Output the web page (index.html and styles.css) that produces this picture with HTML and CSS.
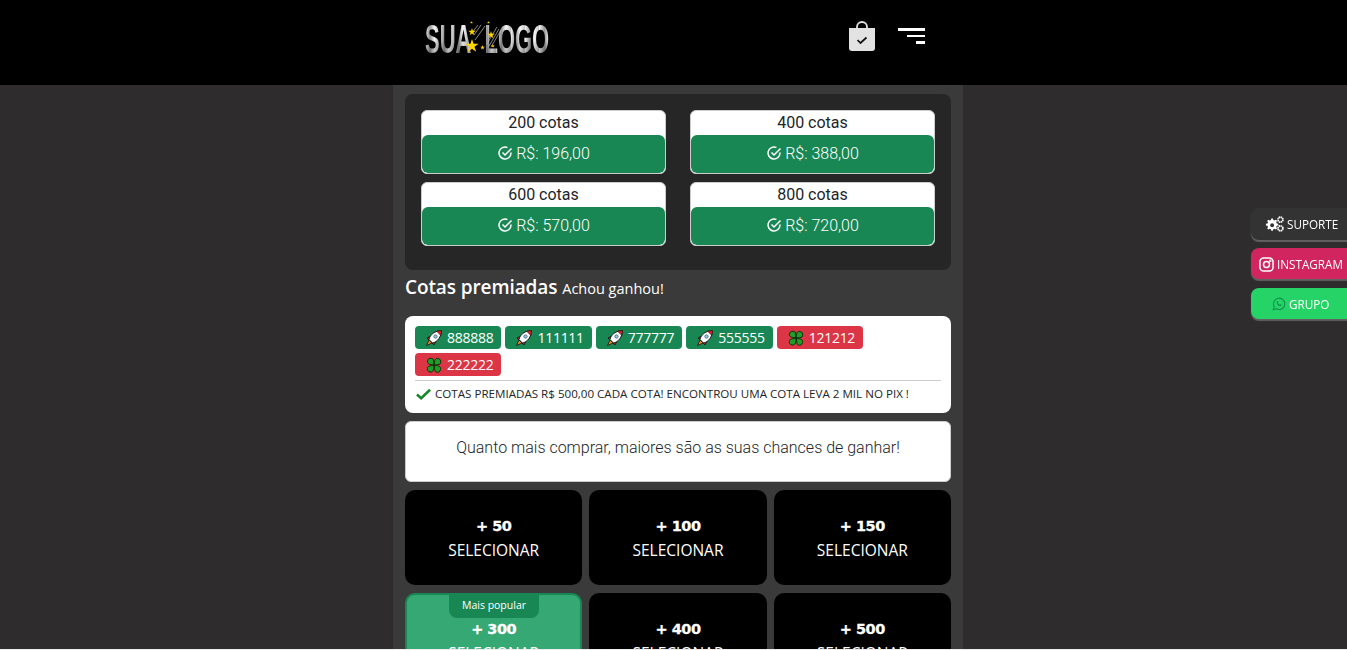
FILE: index.html
```html
<!DOCTYPE html>
<html lang="pt-BR">
<head>
    <title>Sua Logo</title>
    <meta charset="UTF-8">
    <link rel="stylesheet" href="styles.css">
</head>
<body>
    <svg class="defs">
        <symbol id="star" viewBox="-1 -1 2 2">
            <path d="M0-1L.225-.31H.95L.36.12.59.81 0 .38-.59.81-.36.12-.95-.31H-.225Z" fill="#ffd500"/>
        </symbol>
        <symbol id="rocket" viewBox="0 0 16 16">
            <path d="M3 10L.5 15.500 6 13z" fill="#f08a1d" stroke="#111" stroke-width=".8"/>
            <path d="M4 6.500L1 8l2 2zM9.500 12L8 15l-2-2z" fill="#d9252a" stroke="#111" stroke-width=".8"/>
            <path d="M3 9.500C4 4.500 9 .8 15.500.5c-.3 6.500-4 11.500-9 12.500z" fill="#fff" stroke="#111" stroke-width=".9"/>
            <path d="M10.500 1.200L15.500.5l-.7 5z" fill="#d9252a" stroke="#111" stroke-width=".5"/>
            <circle cx="9.500" cy="6.500" r="1.700" fill="#8fd0f2" stroke="#334" stroke-width=".6"/>
        </symbol>
        <symbol id="clover" viewBox="0 0 16 16">
            <g fill="#1f9e2a" stroke="#0a2f0a" stroke-width="1">
                <path d="M8 7.500C3 8 1 6.500 1.500 4 2 1.500 4 1 5 1.500 6.500 .5 8 2.500 8 7.500z"/>
                <path d="M8.500 8C8 3 9.500 1 12 1.500c2.500.5 3 2.500 2.500 3.500 1 1.500-1 3-6 3z"/>
                <path d="M8 8.500C8 13.500 6.500 15.500 4 15 1.500 14.500 1 12.500 1.500 11.500 .5 10 3 8.500 8 8.500z"/>
                <path d="M8.500 8.500c5 0 6.500 1.500 6 4-.5 2.500-2.500 3-3.500 2.500-1.500 1-2.500-1.500-2.500-6.500z"/>
            </g>
        </symbol>
        <symbol id="check" viewBox="0 0 16 16">
            <path d="M14 7.400V8a6 6 0 1 1-3.600-5.500" fill="none" stroke="#fff" stroke-width="1.500"/>
            <path d="M5.500 7.500l2.500 2.500 6.500-6.500" fill="none" stroke="#fff" stroke-width="1.500"/>
        </symbol>
    </svg>

    <header class="topbar">
        <div class="topbar-inner">
            <a class="logo" href="#">
                <span class="logo-text">SUA LOGO</span>
                <svg class="logo-stars" viewBox="0 0 46 34" width="46" height="34">
                    <path d="M12 13l6-8M14 15l7-10M15 20l10-14M27 24l10-17M29 26l10-17M31 27l10-17" stroke="#bbb" stroke-width=".7"/>
                    <use href="#star" x="5" y="19" width="14" height="14"/>
                    <use href="#star" x="8" y="8" width="8" height="8"/>
                    <use href="#star" x="27" y="11" width="8" height="8"/>
                    <use href="#star" x="20" y="25" width="5" height="5"/>
                    <use href="#star" x="31" y="24" width="4" height="4"/>
                    <use href="#star" x="10" y="1" width="3" height="3"/>
                    <use href="#star" x="27" y="1" width="3" height="3"/>
                </svg>
            </a>
            <div class="topbar-icons">
                <svg class="bag-icon" viewBox="0 0 28 30" width="28" height="30">
                    <path d="M9 9V6a5 5 0 0 1 10 0v3" fill="none" stroke="#e2e2e2" stroke-width="1.800"/>
                    <path d="M1 7h26v20a3 3 0 0 1-3 3H4a3 3 0 0 1-3-3z" fill="#e2e2e2"/>
                    <path d="M9.500 19l3 3 6-5.500" fill="none" stroke="#111" stroke-width="1.700"/>
                </svg>
                <div class="menu-icon"><span class="line-a"></span><span class="line-b"></span><span class="line-c"></span></div>
            </div>
        </div>
    </header>

    <main class="page">
        <section class="packs">
            <div class="pack">
                <div class="pack-title">200 cotas</div>
                <div class="pack-price"><svg class="check"><use href="#check"/></svg>R$: 196,00</div>
            </div>
            <div class="pack">
                <div class="pack-title">400 cotas</div>
                <div class="pack-price"><svg class="check"><use href="#check"/></svg>R$: 388,00</div>
            </div>
            <div class="pack">
                <div class="pack-title">600 cotas</div>
                <div class="pack-price"><svg class="check"><use href="#check"/></svg>R$: 570,00</div>
            </div>
            <div class="pack">
                <div class="pack-title">800 cotas</div>
                <div class="pack-price"><svg class="check"><use href="#check"/></svg>R$: 720,00</div>
            </div>
        </section>

        <h2 class="section-title">Cotas premiadas <small>Achou ganhou!</small></h2>

        <section class="prizes">
            <div class="badges">
                <span class="badge green"><svg class="badge-icon"><use href="#rocket"/></svg>888888</span>
                <span class="badge green"><svg class="badge-icon"><use href="#rocket"/></svg>111111</span>
                <span class="badge green"><svg class="badge-icon"><use href="#rocket"/></svg>777777</span>
                <span class="badge green"><svg class="badge-icon"><use href="#rocket"/></svg>555555</span>
                <span class="badge red"><svg class="badge-icon"><use href="#clover"/></svg>121212</span>
                <span class="badge red"><svg class="badge-icon"><use href="#clover"/></svg>222222</span>
            </div>
            <div class="prize-note">
                <svg class="tick" viewBox="0 0 16 12" width="15" height="12"><path d="M1 6.500l4.500 4L15 1.500" fill="none" stroke="#158a2a" stroke-width="2.800"/></svg>
                COTAS PREMIADAS R$ 500,00 CADA COTA! ENCONTROU UMA COTA LEVA 2 MIL NO PIX !
            </div>
        </section>

        <section class="chances">Quanto mais comprar, maiores são as suas chances de ganhar!</section>

        <section class="options">
            <div class="option"><b>+ 50</b><span>SELECIONAR</span></div>
            <div class="option"><b>+ 100</b><span>SELECIONAR</span></div>
            <div class="option"><b>+ 150</b><span>SELECIONAR</span></div>
            <div class="option popular"><em>Mais popular</em><b>+ 300</b><span>SELECIONAR</span></div>
            <div class="option"><b>+ 400</b><span>SELECIONAR</span></div>
            <div class="option"><b>+ 500</b><span>SELECIONAR</span></div>
        </section>
    </main>

    <aside class="side-links">
        <a class="side-link dark" href="#">
            <svg viewBox="0 0 24 20" width="19" height="16" fill="#fff">
                <path d="M9 4.500l1 0 .5 2 1.500.6 1.800-1 1.400 1.400-1 1.800.6 1.500 2 .5v2l-2 .5-.6 1.500 1 1.800-1.400 1.400-1.800-1-1.500.6-.5 2h-2l-.5-2-1.500-.6-1.800 1-1.400-1.400 1-1.800-.6-1.500-2-.5v-2l2-.5.6-1.500-1-1.800 1.400-1.400 1.800 1 1.500-.6.500-2zm0 6a2.500 2.500 0 1 0 0 5 2.500 2.500 0 0 0 0-5z" fill-rule="evenodd" transform="translate(0 -1.500)"/>
                <circle cx="19.500" cy="4.500" r="3.100" fill="none" stroke="#fff" stroke-width="2.300" stroke-dasharray="1.800 .6"/>
                <circle cx="19.500" cy="15.500" r="3.100" fill="none" stroke="#fff" stroke-width="2.300" stroke-dasharray="1.800 .6"/>
            </svg>
            SUPORTE
        </a>
        <a class="side-link insta" href="#">
            <svg viewBox="0 0 16 16" width="15" height="15" fill="none" stroke="#fff" stroke-width="1.600"><rect x="1" y="1" width="14" height="14" rx="4"/><circle cx="8" cy="8" r="3.200"/><circle cx="12" cy="4" r=".5"/></svg>
            INSTAGRAM
        </a>
        <a class="side-link whats" href="#">
            <svg viewBox="0 0 16 16" width="14" height="14" fill="none" stroke="#128c4e" stroke-width="1.200"><path d="M1.500 14.500l1-3.500a6.500 6.500 0 1 1 2.500 2.500z"/><path d="M5.500 5c.5-.8 1-.6 1.200 0l.3.8-.5.8c.5 1 1.300 1.800 2.400 2.300l.8-.6.9.4c.5.3.5.8 0 1.300-2.500 1.300-6-2.500-5.100-5z" fill="#128c4e" stroke="none"/></svg>
            GRUPO
        </a>
    </aside>

    <div class="bottom-edge"></div>
</body>
</html>
```

FILE: styles.css
```css
* { box-sizing: border-box; }
html, body { height: 100%; }
body {
    margin: 0;
    background: #2e2c2c;
    font-family: 'Open Sans', sans-serif;
    color: #212529;
    overflow: hidden;
}
a { color: inherit; text-decoration: none; }
.defs { position: absolute; width: 0; height: 0; }

/* top bar */
.topbar {
    height: 85px;
    background: #000;
}
.topbar-inner {
    width: 570px;
    height: 100%;
    margin-left: 393px;
    padding: 0 38px 0 32px;
    display: flex;
    align-items: center;
    justify-content: space-between;
}
.logo {
    position: relative;
    display: block;
    width: 126px;
    height: 34px;
    margin-bottom: 7px;
}
.logo-text {
    display: block;
    width: 240px;
    font-family: 'Liberation Sans', sans-serif;
    font-weight: 700;
    font-size: 40px;
    line-height: 34px;
    white-space: pre;
    word-spacing: 14px;
    background: linear-gradient(180deg, rgba(255,255,255,.2) 0, rgba(0,0,0,0) 50%, rgba(0,0,0,.3) 100%),
        repeating-linear-gradient(90deg, #f2f2f2 0, #8a8a8a 9px, #f6f6f6 17px, #b8b8b8 26px);
    -webkit-background-clip: text;
    background-clip: text;
    color: transparent;
    transform: scaleX(.55);
    transform-origin: left center;
}
.logo-stars {
    position: absolute;
    left: 35px;
    top: -2px;
}
.topbar-icons {
    display: flex;
    align-items: center;
    gap: 22px;
    margin-bottom: 13px;
}
.bag-icon { display: block; }
.menu-icon {
    width: 27px;
    display: flex;
    flex-direction: column;
    align-items: flex-end;
    gap: 4px;
}
.menu-icon span {
    display: block;
    height: 2.500px;
    background: #fff;
}
.line-a { width: 27px; }
.line-b { width: 18px; }
.line-c { width: 9px; }

/* main column */
.page {
    width: 570px;
    height: 565px;
    margin-left: 393px;
    padding: 9px 12px 0;
    background: #3a3a3a;
}

.packs {
    background: #262626;
    border-radius: 8px;
    padding: 16px 16px 24px;
    display: grid;
    grid-template-columns: 245px 245px;
    justify-content: space-between;
    gap: 8px 24px;
}
.pack {
    height: 64px;
    background: #fff;
    border: 1px solid #ccc;
    border-radius: 6px;
    overflow: hidden;
    text-align: center;
    font-family: Roboto, sans-serif;
}
.pack-title {
    height: 24px;
    line-height: 23px;
    font-size: 16px;
    color: #212529;
}
.pack-price {
    height: 38px;
    padding-bottom: 2px;
    border-radius: 6px;
    background: #198754;
    color: #fff;
    font-size: 16px;
    font-weight: 300;
    display: flex;
    align-items: center;
    justify-content: center;
    gap: 3px;
}
.check {
    width: 16px;
    height: 16px;
}

.section-title {
    margin: 6px 0 0;
    height: 40px;
    font-size: 19px;
    line-height: 22px;
    font-weight: 600;
    letter-spacing: -.1px;
    color: #fff;
}
.section-title small {
    font-size: 14.500px;
    font-weight: 400;
    letter-spacing: 0;
}

.prizes {
    height: 97px;
    background: #fff;
    border-radius: 8px;
    padding: 10px;
}
.badges {
    display: flex;
    flex-wrap: wrap;
    gap: 4px;
    padding-bottom: 4px;
    border-bottom: 1px solid #ccc;
}
.badge {
    height: 23px;
    padding: 0 8px 0 11px;
    border-radius: 4px;
    color: #fff;
    font-size: 14px;
    letter-spacing: -.27px;
    line-height: 23px;
    display: flex;
    align-items: center;
    gap: 5px;
}
.badge-icon {
    width: 16px;
    height: 16px;
}
.green { background: #198754; }
.red { background: #dc3545; }
.prize-note {
    display: flex;
    align-items: center;
    gap: 4px;
    padding: 5px 0 0 1px;
    font-size: 11.600px;
    line-height: 16px;
}
.tick { flex: none; }

.chances {
    height: 61px;
    margin-top: 8px;
    padding-top: 16px;
    background: #fff;
    border: 1px solid #ccc;
    border-radius: 6px;
    text-align: center;
    font-family: Roboto, sans-serif;
    font-weight: 300;
    font-size: 16px;
    line-height: 20px;
}

.options {
    margin-top: 8px;
    display: grid;
    grid-template-columns: repeat(3, 1fr);
    gap: 8px 7px;
}
.option {
    position: relative;
    height: 95px;
    padding-bottom: 2px;
    background: #000;
    border-radius: 10px;
    color: #fff;
    display: flex;
    flex-direction: column;
    align-items: center;
    justify-content: center;
}
.option b {
    font-family: 'DejaVu Sans', sans-serif;
    font-size: 14.500px;
    letter-spacing: -.5px;
    line-height: 24px;
    padding-top: 2px;
    -webkit-text-stroke: .3px #fff;
}
.option span {
    font-size: 15.500px;
    line-height: 24px;
}
.popular {
    background: #35a873;
    border: 2px solid #198754;
}
.popular em {
    position: absolute;
    top: -2px;
    left: 42px;
    width: 90px;
    height: 25px;
    background: #198754;
    border-radius: 0 0 8px 8px;
    font-style: normal;
    font-size: 10.500px;
    line-height: 25px;
    text-align: center;
}

/* floating links on the right edge */
.side-links {
    position: fixed;
    top: 208px;
    right: 0;
    width: 96px;
    display: flex;
    flex-direction: column;
    gap: 9px;
}
.side-link {
    height: 31px;
    padding-left: 14px;
    border-radius: 8px 0 0 8px;
    box-shadow: 0 2px 1px rgba(255, 255, 255, .25);
    color: #fff;
    font-size: 11.700px;
    display: flex;
    align-items: center;
    gap: 3px;
}
.dark { background: #333; height: 32px; margin-bottom: -1px; }
.insta { background: #d0255f; padding: 1px 0 0 8px; }
.whats { background: #25d366; padding-left: 21px; }

.bottom-edge {
    position: fixed;
    left: 0;
    right: 0;
    bottom: 0;
    height: 1px;
    background: #eee;
}
```
